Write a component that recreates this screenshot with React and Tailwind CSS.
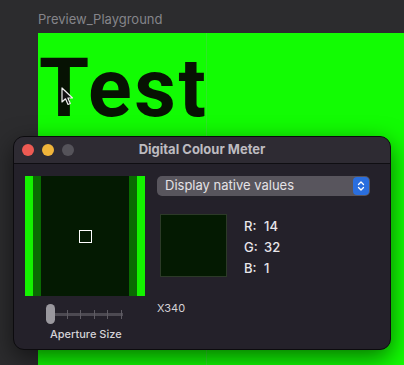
import React from "react";

const Cursor = () => (
  <svg width="13" height="19" viewBox="0 0 13 19" className="absolute left-[61px] top-[87px]">
    <path d="M1 1 L1 15 L4.5 11.8 L7 17.5 L9.3 16.5 L6.9 11 L11.5 11 Z" fill="#111" stroke="#f0f0f0" strokeWidth="1.2" strokeLinejoin="round" />
  </svg>
);

const Loupe = () => (
  <div className="relative flex w-[120px] h-[120px]">
    <div className="w-[8px] bg-[#14f200]" />
    <div className="w-[8px] bg-[#0a6a02]" />
    <div className="flex-1 bg-[#041a02]" />
    <div className="w-[8px] bg-[#0a6a02]" />
    <div className="w-[8px] bg-[#14f200]" />
    <div className="absolute left-[54px] top-[54px] w-[13px] h-[13px] border border-white" />
  </div>
);

const Slider = () => (
  <div className="flex items-center h-[20px] ml-[21px]">
    <div className="w-[9px] h-[20px] rounded-full bg-[#9a989e]" />
    <div className="relative w-[68px] h-[3px] bg-[#4d4a52]">
      {[12, 25, 39, 52, 66].map((l) => (
        <div key={l} className="absolute top-[-3px] w-[1px] h-[9px] bg-[#5e5b63]" style={{ left: l }} />
      ))}
    </div>
  </div>
);

export default function App() {
  return (
    <div
      className="relative w-[404px] h-[365px] overflow-hidden bg-[#2c2c2e] flex flex-col"
      style={{ fontFamily: "Inter, 'Liberation Sans', sans-serif" }}
    >
      <div className="pl-[38px] pt-[11px] h-[33px] text-[13px] leading-[16px] text-[#85858a]">
        Preview_Playground
      </div>
      <div className="flex-1 ml-[38px] bg-[#12fc03] flex">
        <div className="w-[169px] border-r border-[#2ee826]">
          <div
            className="mt-[16px] ml-[1px] text-[81px] leading-[80px] font-bold text-[#071203] tracking-[2.5px] whitespace-nowrap"
            style={{ fontFamily: "Roboto, 'Liberation Sans', sans-serif" }}
          >
            Test
          </div>
        </div>
      </div>
      <Cursor />

      <div className="absolute left-[13px] top-[136px] w-[378px] h-[214px] rounded-[11px] bg-[#24212a] border border-[#0c0b0e] shadow-[0_8px_24px_rgba(0,0,0,0.55)] overflow-hidden flex flex-col">
        <div className="relative h-[27px] bg-[#2e2b33] border-b border-[#0f0e12] flex items-center pl-[8px] gap-[8px] shrink-0">
          <div className="w-[12px] h-[12px] rounded-full bg-[#ee5a53]" />
          <div className="w-[12px] h-[12px] rounded-full bg-[#f0b43a]" />
          <div className="w-[12px] h-[12px] rounded-full bg-[#55535a]" />
          <div className="absolute inset-0 flex items-center justify-center text-[13px] font-bold text-[#bdbbc0]">
            Digital Colour Meter
          </div>
        </div>
        <div className="flex pt-[12px] pl-[11px]">
          <div className="flex flex-col">
            <Loupe />
            <div className="mt-[8px]">
              <Slider />
            </div>
            <div className="mt-[3px] ml-[25px] text-[11px] leading-[14px] text-[#d4d2d6] font-medium">
              Aperture Size
            </div>
          </div>
          <div className="ml-[12px] flex flex-col">
            <div className="w-[213px] h-[20px] rounded-[5px] bg-[#58555d] flex items-center justify-between pl-[8px] pr-[1px]">
              <span className="text-[13px] text-[#e4e2e6]">Display native values</span>
              <div className="w-[16px] h-[18px] rounded-[4px] bg-[#2a6ede] flex items-center justify-center">
                <svg width="8" height="12" viewBox="0 0 8 12">
                  <path d="M1.5 4.5 L4 2 L6.5 4.5 M1.5 7.5 L4 10 L6.5 7.5" fill="none" stroke="#fff" strokeWidth="1.3" strokeLinecap="round" strokeLinejoin="round" />
                </svg>
              </div>
            </div>
            <div className="flex mt-[18px] ml-[3px]">
              <div className="w-[67px] h-[63px] bg-[#041a02] border border-[#2c3a28]" />
              <div className="ml-[17px] mt-[4px] flex flex-col gap-[5px] text-[13px] leading-[16px] text-[#e8e6ea] font-medium">
                <div className="flex"><span className="w-[20px]">R:</span><span>14</span></div>
                <div className="flex"><span className="w-[20px]">G:</span><span>32</span></div>
                <div className="flex"><span className="w-[20px]">B:</span><span>1</span></div>
              </div>
            </div>
            <div className="mt-[24px] text-[11px] leading-[14px] text-[#d4d2d6]">X340</div>
          </div>
        </div>
      </div>
    </div>
  );
}
